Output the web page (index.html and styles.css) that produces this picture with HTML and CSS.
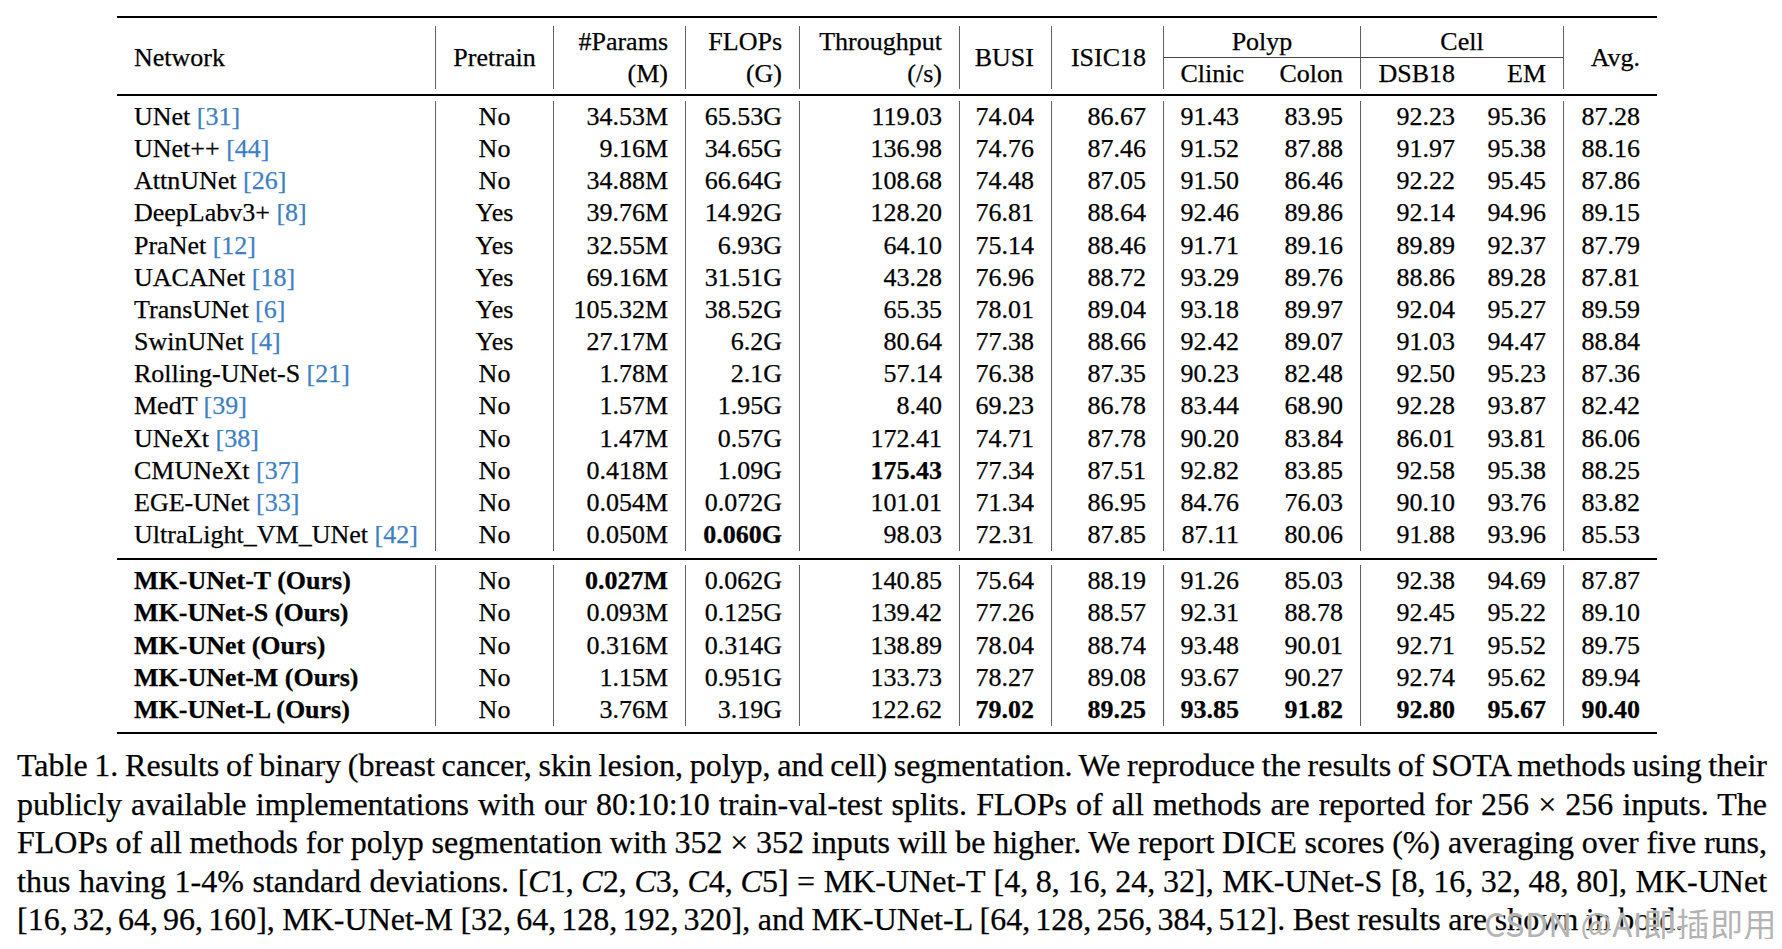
FILE: index.html
```html
<!DOCTYPE html>
<html lang="en">
<head>
<meta charset="utf-8">
<title>Table 1</title>
<link rel="stylesheet" href="styles.css">
</head>
<body>
<div class="page">
  <div class="table-wrap">
    <table class="res">
      <colgroup>
        <col class="c-net"><col class="c-pre"><col class="c-par"><col class="c-flo"><col class="c-thr"><col class="c-busi"><col class="c-isic"><col class="c-cli"><col class="c-col"><col class="c-dsb"><col class="c-em"><col class="c-avg">
      </colgroup>
      <tbody>
        <tr class="rule"><td colspan="12"></td></tr>
        <tr class="gap g8"><td colspan="12"></td></tr>
        <tr class="h1">
          <td rowspan="2" class="l">Network</td>
          <td rowspan="2" class="c v">Pretrain</td>
          <td rowspan="2" class="v two">#Params<br>(M)</td>
          <td rowspan="2" class="v two">FLOPs<br>(G)</td>
          <td rowspan="2" class="v two">Throughput<br>(/s)</td>
          <td rowspan="2" class="v">BUSI</td>
          <td rowspan="2" class="v">ISIC18</td>
          <td colspan="2" class="c v grp">Polyp</td>
          <td colspan="2" class="c v grp">Cell</td>
          <td rowspan="2" class="v">Avg.</td>
        </tr>
        <tr class="h2">
          <td class="v cli">Clinic</td>
          <td>Colon</td>
          <td class="v">DSB18</td>
          <td>EM</td>
        </tr>
        <tr class="gap g5"><td colspan="12"></td></tr>
        <tr class="rule"><td colspan="12"></td></tr>
        <tr class="gap g5"><td colspan="12"></td></tr>

        <tr class="row"><td>UNet <span class="cite">[31]</span></td><td>No</td><td>34.53M</td><td>65.53G</td><td>119.03</td><td>74.04</td><td>86.67</td><td>91.43</td><td>83.95</td><td>92.23</td><td>95.36</td><td>87.28</td></tr>
        <tr class="row"><td>UNet++ <span class="cite">[44]</span></td><td>No</td><td>9.16M</td><td>34.65G</td><td>136.98</td><td>74.76</td><td>87.46</td><td>91.52</td><td>87.88</td><td>91.97</td><td>95.38</td><td>88.16</td></tr>
        <tr class="row"><td>AttnUNet <span class="cite">[26]</span></td><td>No</td><td>34.88M</td><td>66.64G</td><td>108.68</td><td>74.48</td><td>87.05</td><td>91.50</td><td>86.46</td><td>92.22</td><td>95.45</td><td>87.86</td></tr>
        <tr class="row"><td>DeepLabv3+ <span class="cite">[8]</span></td><td>Yes</td><td>39.76M</td><td>14.92G</td><td>128.20</td><td>76.81</td><td>88.64</td><td>92.46</td><td>89.86</td><td>92.14</td><td>94.96</td><td>89.15</td></tr>
        <tr class="row"><td>PraNet <span class="cite">[12]</span></td><td>Yes</td><td>32.55M</td><td>6.93G</td><td>64.10</td><td>75.14</td><td>88.46</td><td>91.71</td><td>89.16</td><td>89.89</td><td>92.37</td><td>87.79</td></tr>
        <tr class="row"><td>UACANet <span class="cite">[18]</span></td><td>Yes</td><td>69.16M</td><td>31.51G</td><td>43.28</td><td>76.96</td><td>88.72</td><td>93.29</td><td>89.76</td><td>88.86</td><td>89.28</td><td>87.81</td></tr>
        <tr class="row"><td>TransUNet <span class="cite">[6]</span></td><td>Yes</td><td>105.32M</td><td>38.52G</td><td>65.35</td><td>78.01</td><td>89.04</td><td>93.18</td><td>89.97</td><td>92.04</td><td>95.27</td><td>89.59</td></tr>
        <tr class="row"><td>SwinUNet <span class="cite">[4]</span></td><td>Yes</td><td>27.17M</td><td>6.2G</td><td>80.64</td><td>77.38</td><td>88.66</td><td>92.42</td><td>89.07</td><td>91.03</td><td>94.47</td><td>88.84</td></tr>
        <tr class="row"><td>Rolling-UNet-S <span class="cite">[21]</span></td><td>No</td><td>1.78M</td><td>2.1G</td><td>57.14</td><td>76.38</td><td>87.35</td><td>90.23</td><td>82.48</td><td>92.50</td><td>95.23</td><td>87.36</td></tr>
        <tr class="row"><td>MedT <span class="cite">[39]</span></td><td>No</td><td>1.57M</td><td>1.95G</td><td>8.40</td><td>69.23</td><td>86.78</td><td>83.44</td><td>68.90</td><td>92.28</td><td>93.87</td><td>82.42</td></tr>
        <tr class="row"><td>UNeXt <span class="cite">[38]</span></td><td>No</td><td>1.47M</td><td>0.57G</td><td>172.41</td><td>74.71</td><td>87.78</td><td>90.20</td><td>83.84</td><td>86.01</td><td>93.81</td><td>86.06</td></tr>
        <tr class="row"><td>CMUNeXt <span class="cite">[37]</span></td><td>No</td><td>0.418M</td><td>1.09G</td><td><b>175.43</b></td><td>77.34</td><td>87.51</td><td>92.82</td><td>83.85</td><td>92.58</td><td>95.38</td><td>88.25</td></tr>
        <tr class="row"><td>EGE-UNet <span class="cite">[33]</span></td><td>No</td><td>0.054M</td><td>0.072G</td><td>101.01</td><td>71.34</td><td>86.95</td><td>84.76</td><td>76.03</td><td>90.10</td><td>93.76</td><td>83.82</td></tr>
        <tr class="row"><td>UltraLight_VM_UNet <span class="cite">[42]</span></td><td>No</td><td>0.050M</td><td><b>0.060G</b></td><td>98.03</td><td>72.31</td><td>87.85</td><td>87.11</td><td>80.06</td><td>91.88</td><td>93.96</td><td>85.53</td></tr>

        <tr class="gap g7"><td colspan="12"></td></tr>
        <tr class="rule"><td colspan="12"></td></tr>
        <tr class="gap g5"><td colspan="12"></td></tr>

        <tr class="row"><td><b>MK-UNet-T (Ours)</b></td><td>No</td><td><b>0.027M</b></td><td>0.062G</td><td>140.85</td><td>75.64</td><td>88.19</td><td>91.26</td><td>85.03</td><td>92.38</td><td>94.69</td><td>87.87</td></tr>
        <tr class="row"><td><b>MK-UNet-S (Ours)</b></td><td>No</td><td>0.093M</td><td>0.125G</td><td>139.42</td><td>77.26</td><td>88.57</td><td>92.31</td><td>88.78</td><td>92.45</td><td>95.22</td><td>89.10</td></tr>
        <tr class="row"><td><b>MK-UNet (Ours)</b></td><td>No</td><td>0.316M</td><td>0.314G</td><td>138.89</td><td>78.04</td><td>88.74</td><td>93.48</td><td>90.01</td><td>92.71</td><td>95.52</td><td>89.75</td></tr>
        <tr class="row"><td><b>MK-UNet-M (Ours)</b></td><td>No</td><td>1.15M</td><td>0.951G</td><td>133.73</td><td>78.27</td><td>89.08</td><td>93.67</td><td>90.27</td><td>92.74</td><td>95.62</td><td>89.94</td></tr>
        <tr class="row"><td><b>MK-UNet-L (Ours)</b></td><td>No</td><td>3.76M</td><td>3.19G</td><td>122.62</td><td><b>79.02</b></td><td><b>89.25</b></td><td><b>93.85</b></td><td><b>91.82</b></td><td><b>92.80</b></td><td><b>95.67</b></td><td><b>90.40</b></td></tr>

        <tr class="gap g6"><td colspan="12"></td></tr>
        <tr class="rule"><td colspan="12"></td></tr>
      </tbody>
    </table>
  </div>

  <div class="caption">
    <div class="cap-line">Table 1. Results of binary (breast cancer, skin lesion, polyp, and cell) segmentation. We reproduce the results of SOTA methods using their</div>
    <div class="cap-line">publicly available implementations with our 80:10:10 train-val-test splits. FLOPs of all methods are reported for 256 <span class="op">×</span> 256 inputs. The</div>
    <div class="cap-line">FLOPs of all methods for polyp segmentation with 352 <span class="op">×</span> 352 inputs will be higher. We report DICE scores (%) averaging over five runs,</div>
    <div class="cap-line">thus having 1-4% standard deviations. <span class="math">[<i>C</i>1, <i>C</i>2, <i>C</i>3, <i>C</i>4, <i>C</i>5]</span> = MK-UNet-T <span class="math">[4, 8, 16, 24, 32]</span>, MK-UNet-S <span class="math">[8, 16, 32, 48, 80]</span>, MK-UNet</div>
    <div class="cap-line last"><span class="math">[16, 32, 64, 96, 160]</span>, MK-UNet-M <span class="math">[32, 64, 128, 192, 320]</span>, and MK-UNet-L <span class="math">[64, 128, 256, 384, 512]</span>. Best results are shown in bold.</div>
    <div class="watermark">CSDN @AI即插即用</div>
  </div>
</div>
</body>
</html>
```

FILE: styles.css
```css
html, body {
  margin: 0;
  padding: 0;
  background: #ffffff;
}

body {
  color: #000;
  font-family: "Liberation Serif", "Times New Roman", serif;
}

.page {
  padding-top: 16px;
  width: 1782px;
}

.table-wrap {
  margin-left: 117px;
}

.res {
  table-layout: fixed;
  border-collapse: separate;
  border-spacing: 0;
  width: 1540px;
  font-size: 26px;
  -webkit-text-stroke: 0.25px #000;
}

.c-net { width: 318px; }
.c-pre { width: 118px; }
.c-par { width: 132px; }
.c-flo { width: 114px; }
.c-thr { width: 160px; }
.c-busi { width: 92px; }
.c-isic { width: 112px; }
.c-cli { width: 93px; }
.c-col { width: 104px; }
.c-dsb { width: 112px; }
.c-em { width: 91px; }
.c-avg { width: 94px; }

.res td {
  padding: 0 17px 0 0;
  text-align: right;
  white-space: nowrap;
  vertical-align: middle;
}

/* horizontal rules and spacers */
.rule td {
  height: 2px;
  padding: 0;
  background: #000;
  font-size: 0;
  line-height: 0;
}

.gap td {
  padding: 0;
  font-size: 0;
  line-height: 0;
}
.g5 td { height: 5px; }
.g6 td { height: 6px; }
.g7 td { height: 7px; }
.g8 td { height: 8px; }

/* header */
.h1 td {
  line-height: 31px;
}
.h2 td {
  line-height: 31px;
}
.res td.two {
  line-height: 31.5px;
}
.res td.l {
  text-align: left;
  padding: 0 0 0 17px;
}
.res td.c {
  text-align: center;
  padding: 0;
}
.res td.v {
  border-left: 1px solid #606060;
}
.res td.grp {
  border-bottom: 1px solid #444;
}
.res td.cli {
  padding-right: 12px;
}

/* data rows */
.row td {
  line-height: 32.15px;
}
.row td:first-child {
  text-align: left;
  padding: 0 0 0 17px;
}
.row td:nth-child(2) {
  text-align: center;
  padding: 0;
}
.row td:nth-child(2),
.row td:nth-child(3),
.row td:nth-child(4),
.row td:nth-child(5),
.row td:nth-child(6),
.row td:nth-child(7),
.row td:nth-child(8),
.row td:nth-child(10),
.row td:nth-child(12) {
  border-left: 1px solid #606060;
}

.cite {
  color: #3d7fc4;
  -webkit-text-stroke: 0.25px #3d7fc4;
}

/* caption */
.caption {
  position: relative;
  margin: 12px 0 0 17px;
  width: 1750px;
  font-size: 32px;
  line-height: 38.6px;
  -webkit-text-stroke: 0.25px #000;
}

.cap-line {
  white-space: nowrap;
  text-align: justify;
  text-align-last: justify;
  word-spacing: -2px;
}

.cap-line.last {
  text-align: left;
  text-align-last: left;
  word-spacing: -0.5px;
}

.math {
  word-spacing: -0.09em;
}

.math i {
  font-style: italic;
}

.watermark {
  position: absolute;
  right: -10px;
  bottom: -4px;
  font-family: "Noto Sans CJK SC", "Noto Sans", sans-serif;
  font-size: 33px;
  line-height: 40px;
  color: rgba(150, 150, 150, 0.72);
  -webkit-text-stroke: 0;
  text-shadow: 0 0 1px #ffffff, 0 0 2px rgba(255, 255, 255, 0.8);
  letter-spacing: 0.5px;
  white-space: nowrap;
}
```
